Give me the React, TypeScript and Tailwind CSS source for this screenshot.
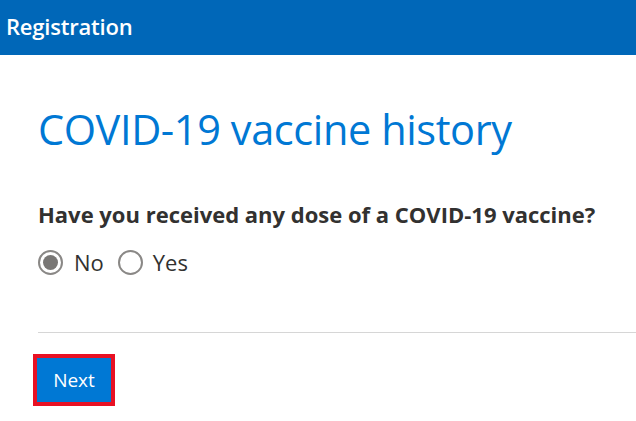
import React, { useState } from 'react'

export default function App() {
  const [dose, setDose] = useState<'no' | 'yes'>('no')

  return (
    <div className="min-h-screen bg-white font-['Open_Sans',sans-serif] overflow-hidden">
      {/* Header */}
      <div className="h-[55px] bg-[#0067b8] flex items-center px-[6px] pb-[3px]">
        <h1 className="text-[22px] font-semibold text-white tracking-[-0.2px]">Registration</h1>
      </div>

      <div className="pl-[38px]">
        <h2 className="mt-[50px] text-[41.5px] leading-[48px] text-[#0078d4] tracking-[-0.4px]">
          COVID-19 vaccine history
        </h2>

        <p className="mt-[46px] text-[22px] leading-[30px] font-bold text-[#323130]">
          Have you received any dose of a COVID-19 vaccine?
        </p>

        <div className="mt-[18px] h-[30px] flex items-center text-[22px] leading-[30px] text-[#323130]">
          <button
            className="flex items-center gap-[11px] mr-[14px]"
            onClick={() => setDose('no')}
          >
            <span className="w-[25px] h-[25px] rounded-full border-2 border-[#8a8886] flex items-center justify-center">
              {dose === 'no' && <span className="w-[15px] h-[15px] rounded-full bg-[#797775]" />}
            </span>
            <span>No</span>
          </button>
          <button className="flex items-center gap-[10px]" onClick={() => setDose('yes')}>
            <span className="w-[25px] h-[25px] rounded-full border-2 border-[#8a8886] flex items-center justify-center">
              {dose === 'yes' && <span className="w-[15px] h-[15px] rounded-full bg-[#797775]" />}
            </span>
            <span>Yes</span>
          </button>
        </div>

        <div className="mt-[55px] h-px bg-[#d6d6d6]" />

        <div className="mt-[21px] ml-[-5px] inline-block border-[4px] border-[#e81123]">
          <button className="w-[74px] h-[44px] bg-[#0078d4] text-white text-[19px] flex items-center justify-center">
            Next
          </button>
        </div>
      </div>
    </div>
  )
}
